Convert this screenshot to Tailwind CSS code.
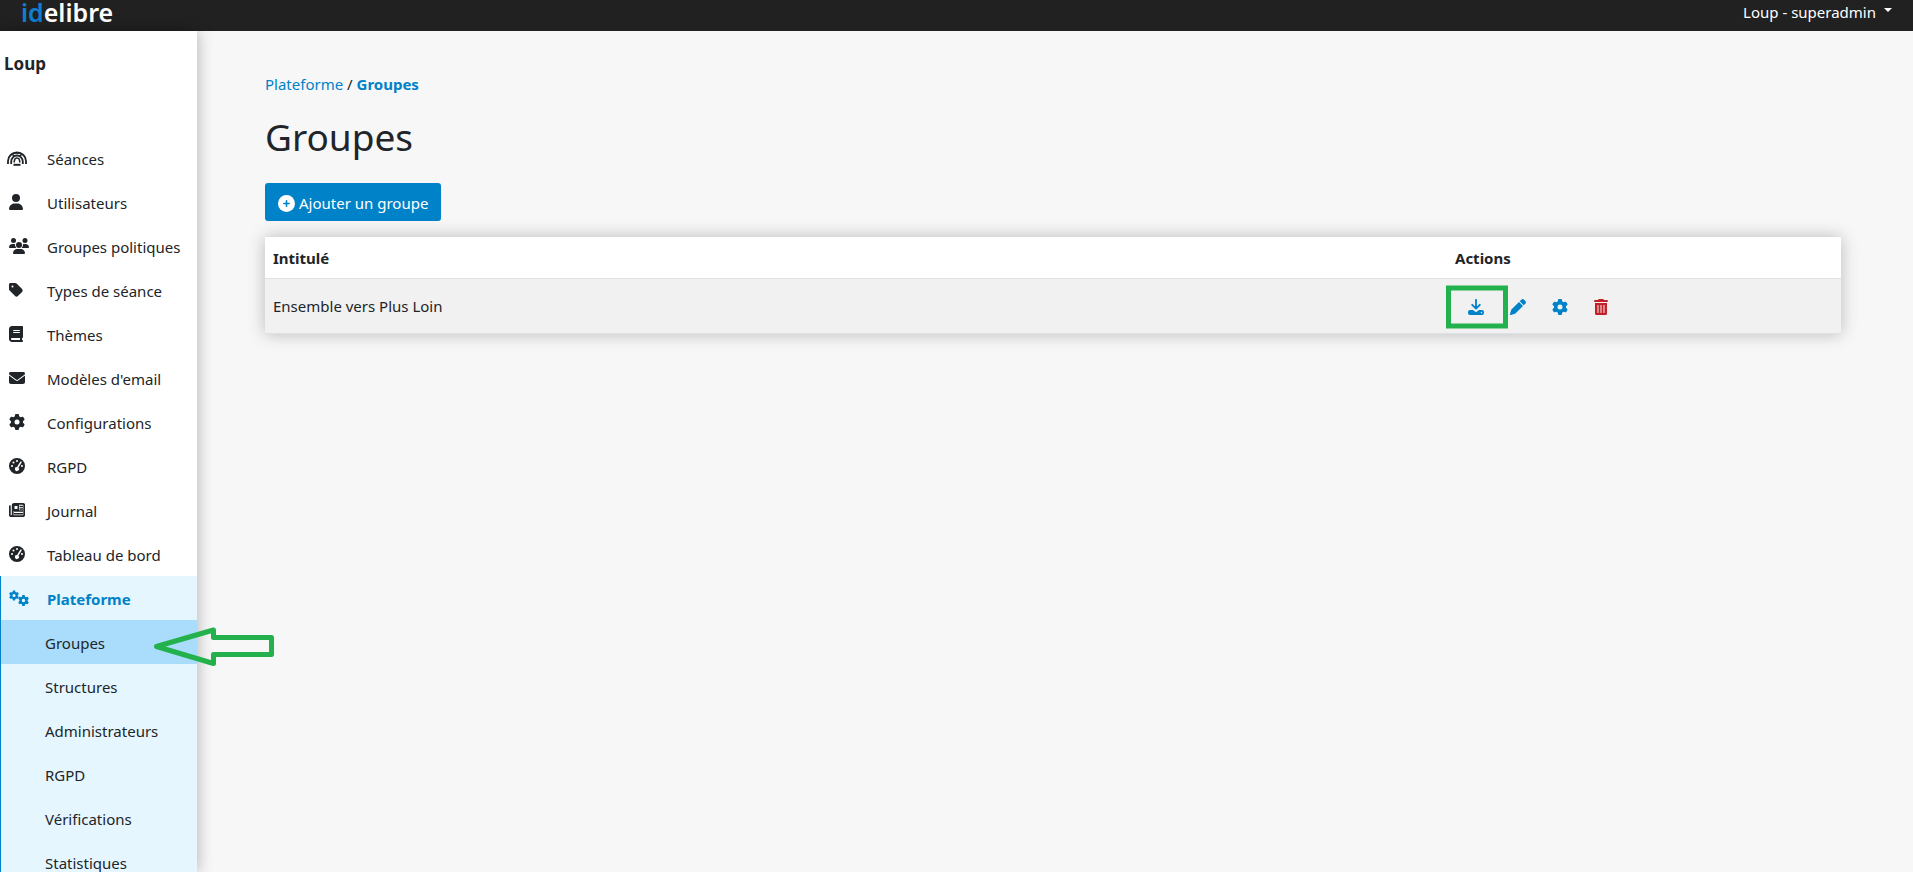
<!DOCTYPE html>
<html lang="fr">
<head>
    <meta charset="UTF-8">
    <meta name="viewport" content="width=device-width, initial-scale=1.0">
    <title>Groupes - idelibre</title>
    <script src="https://cdn.jsdelivr.net/npm/@tailwindcss/browser@4"></script>
</head>
<body class="h-screen overflow-hidden flex flex-col bg-[#f7f7f7] text-[#212529] text-[15px] leading-6 font-['Noto_Sans',sans-serif]">
    <!-- Icons -->
    <svg class="hidden">
        <symbol id="gear" viewBox="0 0 512 512"><path d="M495.9 166.6c3.2 8.7 .5 18.4-6.4 24.6l-43.3 39.4c1.1 8.3 1.7 16.8 1.7 25.4s-.6 17.1-1.7 25.4l43.3 39.4c6.9 6.2 9.6 15.9 6.4 24.6c-4.4 11.9-9.7 23.3-15.8 34.3l-4.7 8.1c-6.6 11-14 21.4-22.1 31.2c-5.9 7.2-15.7 9.6-24.5 6.8l-55.7-17.7c-13.4 10.3-28.2 18.9-44 25.4l-12.5 57.1c-2 9.1-9 16.3-18.2 17.8c-13.8 2.3-28 3.5-42.5 3.5s-28.7-1.2-42.5-3.5c-9.2-1.5-16.2-8.7-18.2-17.8l-12.5-57.1c-15.8-6.5-30.6-15.1-44-25.4L83.1 425.9c-8.8 2.8-18.6 .3-24.5-6.8c-8.1-9.8-15.5-20.2-22.1-31.2l-4.7-8.1c-6.1-11-11.4-22.4-15.8-34.3c-3.2-8.7-.5-18.4 6.4-24.6l43.3-39.4C64.6 273.1 64 264.6 64 256s.6-17.1 1.7-25.4L22.4 191.2c-6.9-6.2-9.6-15.9-6.4-24.6c4.4-11.9 9.7-23.3 15.8-34.3l4.7-8.1c6.6-11 14-21.4 22.1-31.2c5.9-7.2 15.7-9.6 24.5-6.8l55.7 17.7c13.4-10.3 28.2-18.9 44-25.4l12.5-57.1c2-9.1 9-16.3 18.2-17.8C227.3 1.2 241.5 0 256 0s28.7 1.2 42.5 3.5c9.2 1.5 16.2 8.7 18.2 17.8l12.5 57.1c15.8 6.5 30.6 15.1 44 25.4l55.7-17.7c8.8-2.8 18.6-.3 24.5 6.8c8.1 9.8 15.5 20.2 22.1 31.2l4.7 8.1c6.1 11 11.4 22.4 15.8 34.3zM256 336a80 80 0 1 0 0-160 80 80 0 1 0 0 160z"/></symbol>
        <symbol id="gauge" viewBox="0 0 16 16"><path fill-rule="evenodd" d="M8 0a8 8 0 1 1 0 16A8 8 0 0 1 8 0zM8 2a1 1 0 1 0 0 2 1 1 0 0 0 0-2zM4.5 3.5a1 1 0 1 0 0 2 1 1 0 0 0 0-2zM3 7a1 1 0 1 0 0 2 1 1 0 0 0 0-2zM13 7a1 1 0 1 0 0 2 1 1 0 0 0 0-2zM11.4 3.6L8.1 9a2 2 0 1 0 1.4 .7L12.6 4.4a.75 .75 0 0 0-1.2-.8z"/></symbol>
    </svg>

    <header class="h-[31px] shrink-0 bg-[#212121] text-white flex justify-between items-start pl-[21px] pr-[21px]">
        <a href="#" class="text-[25px] leading-[25px] font-semibold"><span class="text-[#0f7fd1]">id</span>elibre</a>
        <button class="flex items-center gap-2">
            Loup - superadmin
            <span class="border-x-4 border-x-transparent border-t-4 border-t-white mb-1"></span>
        </button>
    </header>

    <div class="flex flex-1 min-h-0">
        <aside class="w-[197px] shrink-0 bg-white shadow-[0_0_15px_rgba(0,0,0,0.3)]">
            <h2 class="h-[105px] pt-[21px] pl-1 text-[17px] font-bold">Loup</h2>
            <nav>
                <ul>
                    <li><a href="#" class="flex items-center h-11 pt-0.5 pl-[7px] gap-5">
                        <svg class="w-5 h-5" viewBox="0 0 20 20" fill="none" stroke="currentColor"><path d="M1 15v-3a9 8.500 0 0 1 18 0v3" stroke-width="1.8"/><path d="M4.200 15v-2.500a5.800 6 0 0 1 11.600 0V15" stroke-width="1.8"/><path d="M7 13.500l.8-3.300a2.500 2.500 0 0 1 4.400 0l.8 3.300M5 4.500l2.200 3M15 4.500l-2.200 3M7 4h6" stroke-width="1.5"/><path d="M6.500 15.800h7" stroke-width="2"/></svg>
                        Séances</a></li>
                    <li><a href="#" class="flex items-center h-11 pt-0.5 pl-[9px] gap-[18px]">
                        <svg class="w-5 h-4 mb-0.5" viewBox="0 0 640 512" preserveAspectRatio="xMinYMid" fill="currentColor"><path d="M224 256A128 128 0 1 0 224 0a128 128 0 1 0 0 256zm-45.7 48C79.8 304 0 383.8 0 482.3C0 498.7 13.3 512 29.7 512H418.3c16.4 0 29.7-13.3 29.7-29.7C448 383.8 368.2 304 269.7 304H178.3z"/></svg>
                        Utilisateurs</a></li>
                    <li><a href="#" class="flex items-center h-11 pt-0.5 pl-[9px] gap-[18px]">
                        <svg class="w-5 h-4 mb-0.5" viewBox="0 0 640 512" fill="currentColor"><circle cx="144" cy="80" r="80"/><circle cx="512" cy="80" r="80"/><circle cx="320" cy="224" r="96"/><path d="M0 298.7C0 239.8 47.8 192 106.7 192h42.7c15.9 0 31 3.5 44.6 9.7a128 128 0 0 0 40.7 118.3H21.3C9.6 320 0 310.4 0 298.7zM405.3 320a128 128 0 0 0 40.7-118.3c13.6-6.3 28.7-9.7 44.6-9.7h42.7C592.2 192 640 239.8 640 298.7c0 11.8-9.6 21.3-21.3 21.3zM128 485.3C128 411.7 187.7 352 261.3 352h117.4C452.3 352 512 411.7 512 485.3c0 14.7-11.9 26.7-26.7 26.7H154.7c-14.7 0-26.7-11.9-26.7-26.7z"/></svg>
                        Groupes politiques</a></li>
                    <li><a href="#" class="flex items-center h-11 pt-0.5 pl-[9px] gap-[18px]">
                        <svg class="w-5 h-4 mb-0.5" viewBox="0 0 640 512" preserveAspectRatio="xMinYMid" fill="currentColor"><path d="M0 80V229.5c0 17 6.7 33.3 18.7 45.3l176 176c25 25 65.5 25 90.5 0L418.7 317.3c25-25 25-65.5 0-90.5l-176-176c-12-12-28.3-18.7-45.3-18.7H48C21.5 32 0 53.5 0 80zm112 32a32 32 0 1 1 0 64 32 32 0 1 1 0-64z"/></svg>
                        Types de séance</a></li>
                    <li><a href="#" class="flex items-center h-11 pt-0.5 pl-[9px] gap-[18px]">
                        <svg class="w-5 h-4 mb-0.5" viewBox="0 0 640 512" preserveAspectRatio="xMinYMid" fill="currentColor"><path d="M96 0C43 0 0 43 0 96V416c0 53 43 96 96 96H384h32c17.7 0 32-14.3 32-32s-14.3-32-32-32V384c17.7 0 32-14.3 32-32V32c0-17.7-14.3-32-32-32H384 96zm0 384H352v64H96c-17.7 0-32-14.3-32-32s14.3-32 32-32zm32-240c0-8.8 7.2-16 16-16H336c8.8 0 16 7.2 16 16s-7.2 16-16 16H144c-8.8 0-16-7.2-16-16zm16 48H336c8.8 0 16 7.2 16 16s-7.2 16-16 16H144c-8.8 0-16-7.2-16-16s7.2-16 16-16z"/></svg>
                        Thèmes</a></li>
                    <li><a href="#" class="flex items-center h-11 pt-0.5 pl-[9px] gap-[18px]">
                        <svg class="w-5 h-4 mb-0.5" viewBox="0 0 640 512" preserveAspectRatio="xMinYMid" fill="currentColor"><path d="M48 64C21.5 64 0 85.5 0 112c0 15.1 7.1 29.3 19.2 38.4L236.8 313.6c11.4 8.5 27 8.5 38.4 0L492.8 150.4c12.1-9.1 19.2-23.3 19.2-38.4c0-26.5-21.5-48-48-48H48zM0 176V384c0 35.3 28.7 64 64 64H448c35.3 0 64-28.7 64-64V176L294.4 339.2c-22.8 17.1-54 17.1-76.8 0L0 176z"/></svg>
                        Modèles d'email</a></li>
                    <li><a href="#" class="flex items-center h-11 pt-0.5 pl-[9px] gap-[22px]">
                        <svg class="w-4 h-4 mb-0.5" fill="currentColor"><use href="#gear"/></svg>
                        Configurations</a></li>
                    <li><a href="#" class="flex items-center h-11 pt-0.5 pl-[9px] gap-[22px]">
                        <svg class="w-4 h-4 mb-0.5" fill="currentColor"><use href="#gauge"/></svg>
                        RGPD</a></li>
                    <li><a href="#" class="flex items-center h-11 pt-0.5 pl-[9px] gap-[22px]">
                        <svg class="w-4 h-4 mb-0.5" viewBox="0 0 16 16" fill="none" stroke="currentColor" stroke-width="1.8"><path d="M3.700 12.500V3.200a1.400 1.400 0 0 1 1.400-1.400h8.700a1.400 1.400 0 0 1 1.400 1.400v9.600a1.400 1.400 0 0 1-1.400 1.400H2.200a1.400 1.400 0 0 1-1.400-1.400V3.500M3.700 12.500a1.500 1.500 0 0 1-1.500 1.700"/><path d="M5 9h9M5 11.700h9M10.500 4.500H14M10.500 7H14" stroke-width="1.5"/><path fill="currentColor" stroke="none" d="M4 2h6v7H4zM5.500 4v3h3V4z" fill-rule="evenodd"/></svg>
                        Journal</a></li>
                    <li><a href="#" class="flex items-center h-11 pt-0.5 pl-[9px] gap-[22px]">
                        <svg class="w-4 h-4 mb-0.5" fill="currentColor"><use href="#gauge"/></svg>
                        Tableau de bord</a></li>
                    <li class="bg-[#e5f6ff] border-l border-[#0082c8]">
                        <a href="#" class="flex items-center h-11 pt-0.5 pl-2 gap-[18px] font-bold text-[#0082c8]">
                            <svg class="w-5 h-4 mb-0.5" viewBox="0 0 20 16" fill="currentColor"><use href="#gear" x="0" y="0" width="10" height="11"/><use href="#gear" x="9" y="5" width="11" height="11"/></svg>
                            Plateforme</a>
                        <ul>
                            <li><a href="#" class="flex items-center h-11 pt-0.5 pl-11 bg-[#aaddfb]">Groupes</a></li>
                            <li><a href="#" class="flex items-center h-11 pt-0.5 pl-11">Structures</a></li>
                            <li><a href="#" class="flex items-center h-11 pt-0.5 pl-11">Administrateurs</a></li>
                            <li><a href="#" class="flex items-center h-11 pt-0.5 pl-11">RGPD</a></li>
                            <li><a href="#" class="flex items-center h-11 pt-0.5 pl-11">Vérifications</a></li>
                            <li><a href="#" class="flex items-center h-11 pt-0.5 pl-11">Statistiques</a></li>
                        </ul>
                    </li>
                </ul>
            </nav>
        </aside>

        <main class="flex-1 pl-[68px] pr-[72px] pt-[41px]">
            <div>
                <a href="#" class="text-[#0082c8]">Plateforme</a> /
                <a href="#" class="text-[#0082c8] font-bold">Groupes</a>
            </div>
            <h1 class="text-[37px] leading-12 mt-[17px]">Groupes</h1>
            <button class="flex items-center gap-1 h-[38px] px-[13px] pt-0.5 mt-[22px] rounded-[3px] bg-[#0082c8] text-white">
                <svg class="w-[17px] h-[17px]" viewBox="0 0 16 16"><circle cx="8" cy="8" r="8" fill="#fff"/><path d="M8 5.500v5M5.500 8h5" stroke="#0082c8" stroke-width="1.5" stroke-linecap="round"/></svg>
                Ajouter un groupe
            </button>
            <table class="w-full mt-4 bg-white text-left table-fixed shadow-[0_0_16px_rgba(0,0,0,0.25)]">
                <thead>
                    <tr class="h-[41px] border-b border-[#dee2e6]">
                        <th class="w-3/4 px-2 pt-0.5 font-bold">Intitulé</th>
                        <th class="px-2 pt-0.5 font-bold">Actions</th>
                    </tr>
                </thead>
                <tbody>
                    <tr class="h-[55px] bg-[#f1f1f1] border-b border-[#dee2e6]">
                        <td class="px-2">Ensemble vers Plus Loin</td>
                        <td class="pt-0.5">
                            <div class="relative flex items-center gap-[26px] pl-[21px]">
                                <a href="#" title="Télécharger" class="text-[#0082c8]">
                                    <svg class="w-4 h-4" viewBox="0 0 16 16"><path d="M8 .8V9M4.200 5.800L8 9.500l3.800-3.700" fill="none" stroke="currentColor" stroke-width="1.8" stroke-linecap="round" stroke-linejoin="round"/><path fill="currentColor" fill-rule="evenodd" d="M2 11h3l1.600 1.300a2 2 0 0 0 2.800 0L11 11h3a2 2 0 0 1 2 2v1a2 2 0 0 1-2 2H2a2 2 0 0 1-2-2v-1a2 2 0 0 1 2-2zM13.500 12.800a.75 .75 0 1 0 0 1.500 .75 .75 0 0 0 0-1.500z"/></svg>
                                </a>
                                <a href="#" title="Modifier" class="text-[#0082c8]">
                                    <svg class="w-4 h-4" viewBox="0 0 16 16" fill="currentColor"><path d="M11.300 .7a2 2 0 0 1 2.800 0l1.200 1.200a2 2 0 0 1 0 2.800L13.700 6.300 9.700 2.300zM9 3l4 4-7.300 7.300a2 2 0 0 1-.8 .5L.9 16a.7 .7 0 0 1-.9-.9l1.200-4a2 2 0 0 1 .5-.8z"/></svg>
                                </a>
                                <a href="#" title="Configurer" class="text-[#0082c8]">
                                    <svg class="w-4 h-4" fill="currentColor"><use href="#gear"/></svg>
                                </a>
                                <a href="#" title="Supprimer" class="text-[#c22026]">
                                    <svg class="w-[14px] h-4" viewBox="0 0 14 16" fill="currentColor"><path fill-rule="evenodd" d="M4.200 .6A1 1 0 0 1 5.100 0h3.800a1 1 0 0 1 .9 .6l.2 .4h3a1 1 0 0 1 0 2H1a1 1 0 0 1 0-2h3zM1 4h12v10.500a1.500 1.500 0 0 1-1.500 1.500h-9A1.500 1.500 0 0 1 1 14.500zM3.500 6v8h1V6zM6.500 6v8h1V6zM9.500 6v8h1V6z"/></svg>
                                </a>
                                <!-- highlight -->
                                <span class="absolute -left-px top-1/2 -translate-y-1/2 w-[62px] h-[43px] border-5 border-[#22b14c]"></span>
                            </div>
                        </td>
                    </tr>
                </tbody>
            </table>
        </main>
    </div>

    <!-- arrow pointing at the current entry -->
    <svg class="absolute left-[150px] top-[624px] w-[128px] h-[46px]" viewBox="150 624 128 46" fill="none" stroke="#22b14c" stroke-width="5" stroke-linejoin="round"><path d="M156.500 646.500L213.500 630V637.500H271.500V654.500H213.500V663.500Z"/></svg>
</body>
</html>
